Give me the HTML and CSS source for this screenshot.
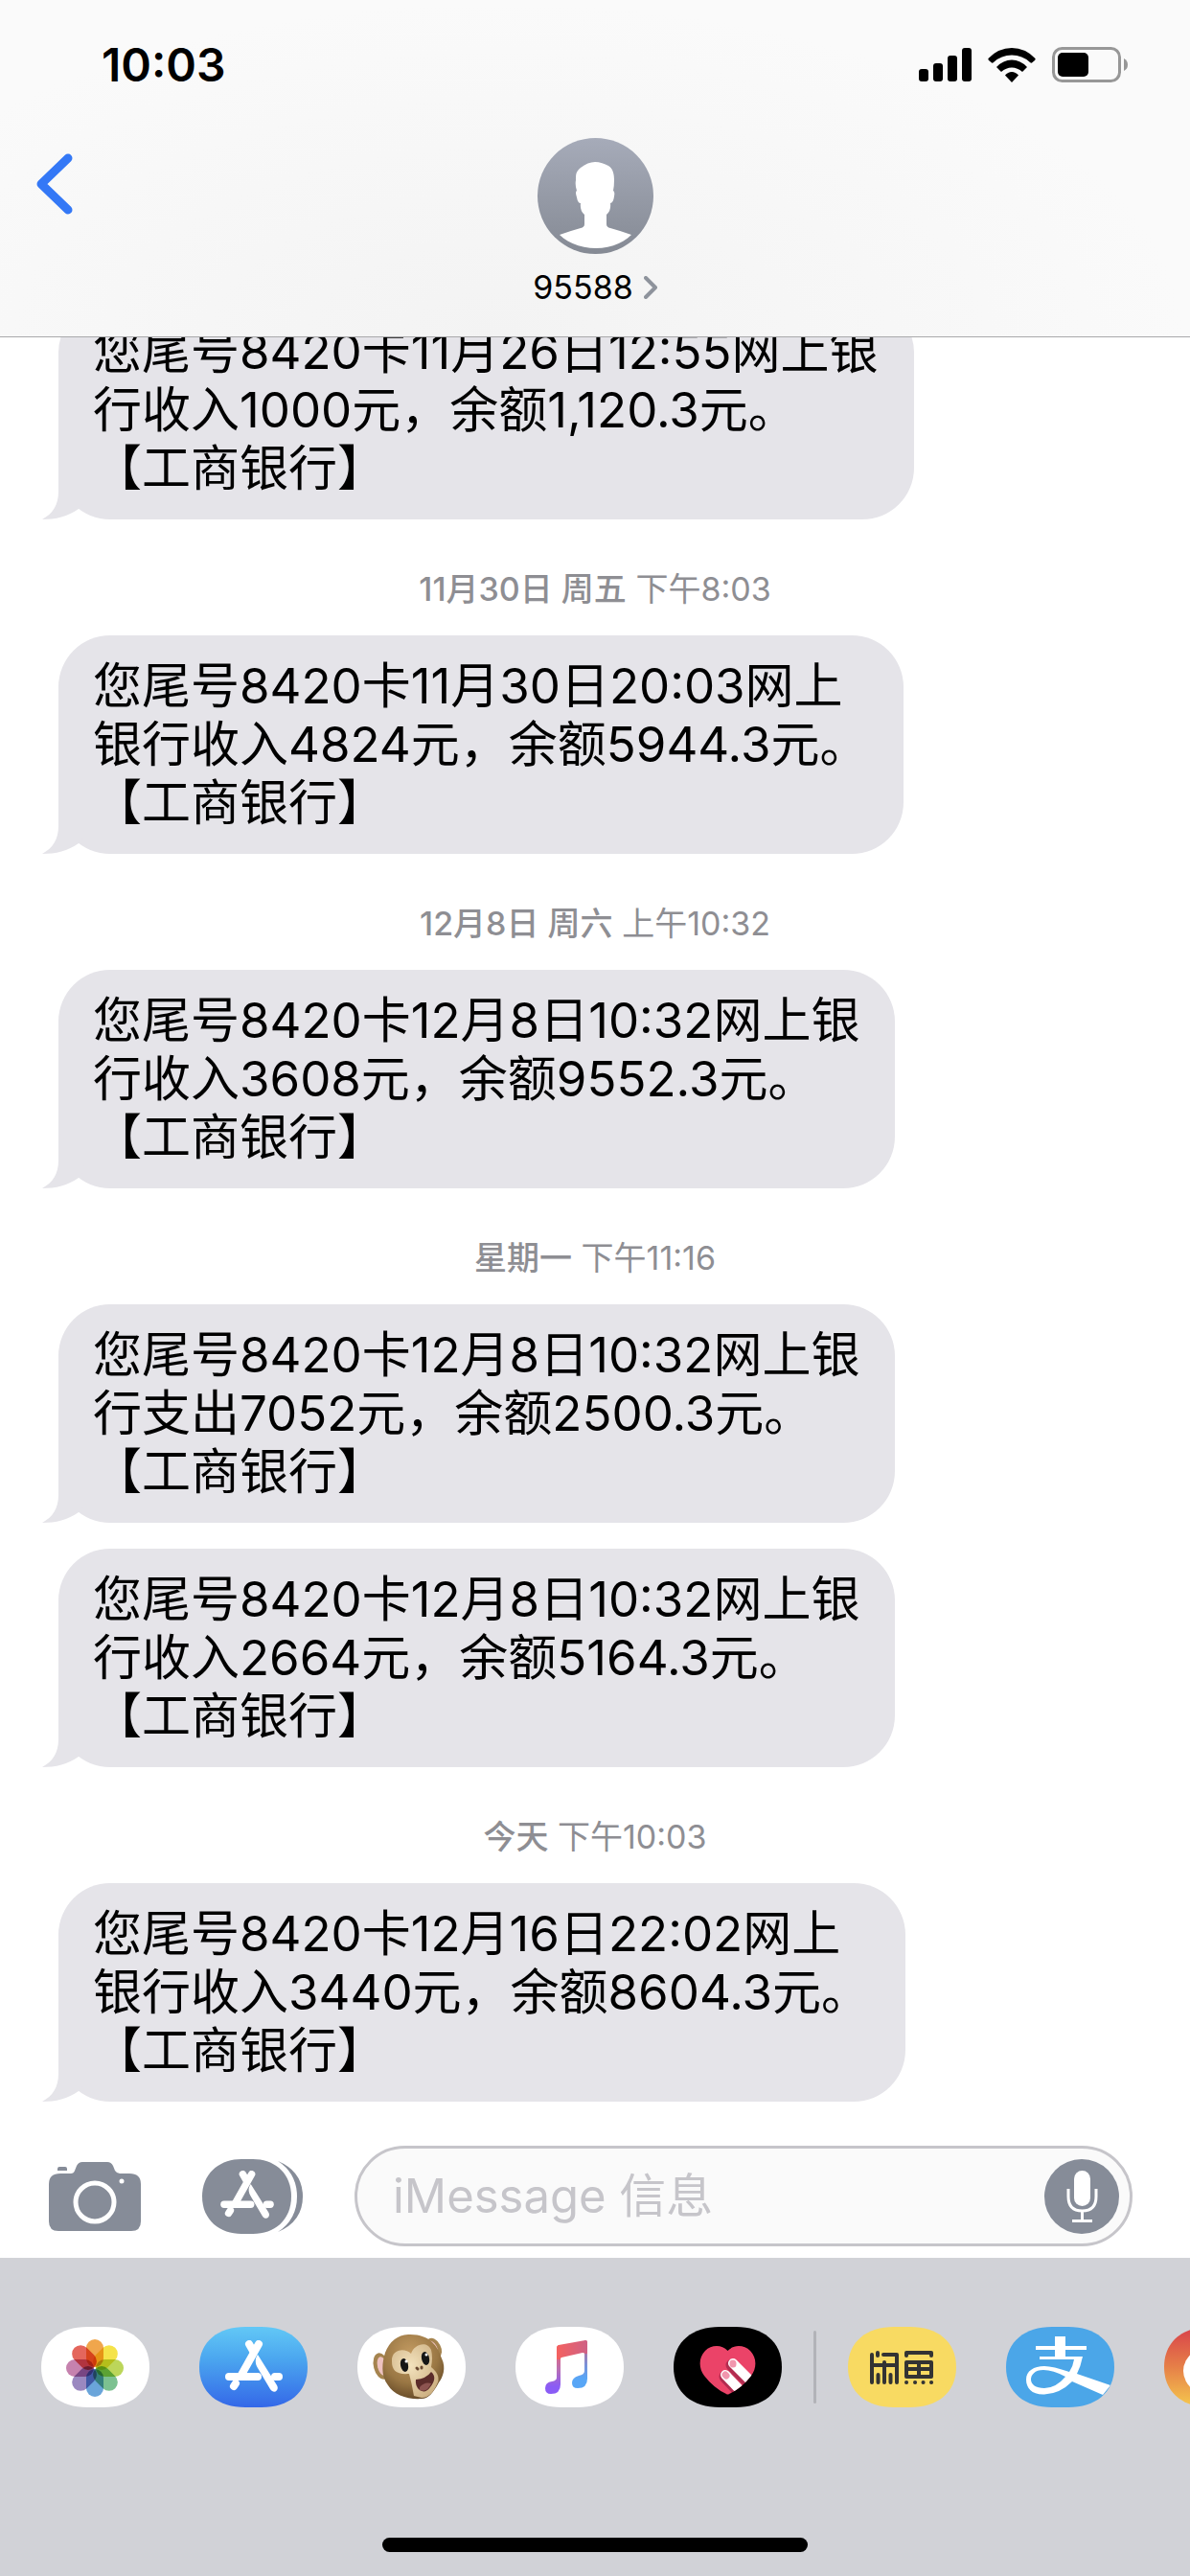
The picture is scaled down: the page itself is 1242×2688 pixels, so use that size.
FILE: index.html
```html
<!DOCTYPE html>
<html lang="zh-CN">

<head>
  <meta charset="UTF-8">
  <meta name="viewport" content="width=device-width, initial-scale=1.0">
  <title>95588</title>
  <link rel="stylesheet" href="styles.css">
</head>

<body>
  <!-- shared shapes -->
  <svg class="defs" aria-hidden="true">
    <defs>
      <symbol id="tail" viewBox="0 0 46 60">
        <path d="M17 0V31C17 45 11 54 0 60C14 60 27 57 38 49L46 40Z" />
      </symbol>
      <symbol id="appstore" viewBox="0 0 60 54">
        <g fill="none" stroke="currentColor" stroke-width="8" stroke-linecap="round">
          <path d="M4 38H34" />
          <path d="M25 4L29 11" />
          <path d="M35 4L17 36" />
          <path d="M52 38H56" />
          <path d="M9 48L11 45" />
        </g>
        <path d="M34 15C31 19 31 24 34 29L47 51C51 57 57 52 54 47Z" fill="currentColor" />
      </symbol>
      <clipPath id="pill">
        <path d="M0 42C0 15 20 0 48 0H65C93 0 113 15 113 42S93 84 65 84H48C20 84 0 69 0 42Z" />
      </clipPath>
    </defs>
  </svg>

  <header class="header">
    <div class="status">
      <span class="time">10:03</span>
      <div class="status-icons">
        <svg width="55" height="36" viewBox="0 0 55 36">
          <rect x="0" y="22" width="10" height="13" rx="3" />
          <rect x="15" y="16" width="10" height="19" rx="3" />
          <rect x="30" y="8" width="10" height="27" rx="3" />
          <rect x="45" y="0" width="10" height="35" rx="3" />
        </svg>
        <svg width="50" height="36" viewBox="0 0 50 36">
          <path d="M0.500 11Q11 0 25 0T49.500 11Q50 12 49 13L46 15.500Q45 16 44 15Q36 7.500 25 7.500T6 15Q5 16 4 15.500L1 13Q0 12 0.500 11Z" />
          <path d="M9 20Q16 12.500 25 12.500T41 20L36 25Q31 20.500 25 20.500T14 25Z" />
          <path d="M18 28.500Q21 25 25 25T32 28.500L25 36Z" />
        </svg>
        <svg width="80" height="38" viewBox="0 0 80 38">
          <rect x="1.500" y="1.500" width="69" height="34" rx="9" fill="none" stroke="#979797" stroke-width="3" />
          <rect x="6" y="6" width="32" height="25" rx="5" />
          <path d="M75 12Q79 14 79 18.500T75 25Z" fill="#979797" />
        </svg>
      </div>
    </div>
    <div class="navbar">
      <button class="back" aria-label="返回">
        <svg width="38" height="64" viewBox="0 0 38 64">
          <path d="M33 5L5 32L33 59" fill="none" stroke="#3478f6" stroke-width="9" stroke-linecap="round" stroke-linejoin="round" />
        </svg>
      </button>
      <a class="contact" href="#contact">
        <svg width="121" height="121" viewBox="0 0 121 121">
          <defs>
            <linearGradient id="avatar-bg" x1="0" y1="0" x2="0" y2="1">
              <stop offset="0" stop-color="#a6abb9" />
              <stop offset="1" stop-color="#858a94" />
            </linearGradient>
          </defs>
          <circle cx="60.500" cy="60.500" r="60.500" fill="url(#avatar-bg)" />
          <path fill="#fff" d="M60 25C65 25 70 27 74 29C79 32 80 38 80 44Q80 50 79 55Q81 56 80 61Q79 68 76 68Q77 76 72 80V90Q72 93 76 94Q87 97 98 101C89 110 75 115 61 115S32 110 23 101Q34 97 45 94Q49 93 49 90V80Q44 76 45 68Q42 68 41 62Q39 56 41 55Q39 49 40 44C40 38 40 35 45 31C50 27 55 25 60 25Z" />
        </svg>
        <span class="contact-name">95588
          <svg width="14" height="24" viewBox="0 0 14 24">
            <path d="M2 2L12 12L2 22" fill="none" stroke="#8e939c" stroke-width="4" stroke-linecap="round" stroke-linejoin="round" />
          </svg>
        </span>
      </a>
    </div>
  </header>

  <main class="messages">
    <p class="bubble">您尾号8420卡11月26日12:55网上银<br>行收入1000元，余额1,120.3元。<br>【工商银行】<svg class="tail"><use href="#tail" /></svg></p>
    <div class="date"><b>11月30日 周五</b> 下午8:03</div>
    <p class="bubble">您尾号8420卡11月30日20:03网上<br>银行收入4824元，余额5944.3元。<br>【工商银行】<svg class="tail"><use href="#tail" /></svg></p>
    <div class="date"><b>12月8日 周六</b> 上午10:32</div>
    <p class="bubble">您尾号8420卡12月8日10:32网上银<br>行收入3608元，余额9552.3元。<br>【工商银行】<svg class="tail"><use href="#tail" /></svg></p>
    <div class="date"><b>星期一</b> 下午11:16</div>
    <p class="bubble">您尾号8420卡12月8日10:32网上银<br>行支出7052元，余额2500.3元。<br>【工商银行】<svg class="tail"><use href="#tail" /></svg></p>
    <p class="bubble next">您尾号8420卡12月8日10:32网上银<br>行收入2664元，余额5164.3元。<br>【工商银行】<svg class="tail"><use href="#tail" /></svg></p>
    <div class="date"><b>今天</b> 下午10:03</div>
    <p class="bubble">您尾号8420卡12月16日22:02网上<br>银行收入3440元，余额8604.3元。<br>【工商银行】<svg class="tail"><use href="#tail" /></svg></p>
  </main>

  <form class="compose">
    <button type="button" class="icon-btn" aria-label="相机">
      <svg width="96" height="72" viewBox="0 0 96 72">
        <path fill="#868c98" d="M9 9V7Q9 5 11 5H17Q19 5 19 7V9ZM12 12H23Q26 12 27 9L29 4Q31 0 35 0H61Q65 0 67 4L69 9Q71 12 74 12H84Q96 12 96 23V62Q96 72 86 72H10Q0 72 0 62V23Q0 12 12 12Z" />
        <circle cx="48" cy="42" r="20" fill="none" stroke="#fff" stroke-width="5" />
        <circle cx="76" cy="20" r="2.500" fill="#fff" />
      </svg>
    </button>
    <button type="button" class="icon-btn" aria-label="App">
      <svg width="106" height="78" viewBox="0 0 106 78">
        <path fill="#868c98" d="M0 39C0 14 19 0 41 0H53C75 0 93 14 93 39S75 78 53 78H41C19 78 0 64 0 39Z" />
        <path fill="#868c98" d="M79 2Q105 13 105 39T79 76Q99 63 99 39T79 2Z" />
        <svg x="19" y="12" width="56" height="50" color="#fff"><use href="#appstore" /></svg>
      </svg>
    </button>
    <div class="field">
      <input class="field-input" type="text" placeholder="iMessage 信息" aria-label="iMessage 信息">
      <button type="button" class="mic" aria-label="语音">
        <svg width="78" height="78" viewBox="0 0 78 78">
          <circle cx="39" cy="39" r="39" fill="#868c98" />
          <rect x="31" y="12" width="17" height="37" rx="8.500" fill="#fff" />
          <path d="M25 31V39Q25 54 39.500 54T54 39V31M39.500 54V64M29 64.500H50" fill="none" stroke="#fff" stroke-width="3" />
        </svg>
      </button>
    </div>
  </form>

  <nav class="tray">
    <div class="apps">
      <button class="app" aria-label="照片">
        <svg width="113" height="84" viewBox="0 0 113 84">
          <g clip-path="url(#pill)">
            <rect width="113" height="84" fill="#fff" />
            <g class="petals" transform="translate(56 43)">
              <rect x="-9" y="-30" width="18" height="29" rx="9" fill="#f0a64c" />
              <rect x="-9" y="-30" width="18" height="29" rx="9" fill="#f5e34a" transform="rotate(45)" />
              <rect x="-9" y="-30" width="18" height="29" rx="9" fill="#bcd65a" transform="rotate(90)" />
              <rect x="-9" y="-30" width="18" height="29" rx="9" fill="#7cc190" transform="rotate(135)" />
              <rect x="-9" y="-30" width="18" height="29" rx="9" fill="#6aa5da" transform="rotate(180)" />
              <rect x="-9" y="-30" width="18" height="29" rx="9" fill="#9a88c0" transform="rotate(225)" />
              <rect x="-9" y="-30" width="18" height="29" rx="9" fill="#c682ae" transform="rotate(270)" />
              <rect x="-9" y="-30" width="18" height="29" rx="9" fill="#e4665c" transform="rotate(315)" />
            </g>
          </g>
        </svg>
      </button>
      <button class="app" aria-label="App Store">
        <svg width="113" height="84" viewBox="0 0 113 84">
          <defs>
            <linearGradient id="store-bg" x1="0" y1="0" x2="0" y2="1">
              <stop offset="0" stop-color="#62c8f6" />
              <stop offset="0.400" stop-color="#4ba6ef" />
              <stop offset="1" stop-color="#3468e8" />
            </linearGradient>
          </defs>
          <rect width="113" height="84" fill="url(#store-bg)" clip-path="url(#pill)" />
          <svg x="27" y="14" width="60" height="54" color="#fff"><use href="#appstore" /></svg>
        </svg>
      </button>
      <button class="app" aria-label="拟我表情">
        <svg width="113" height="84" viewBox="0 0 113 84">
          <defs>
            <radialGradient id="fur" cx="0.450" cy="0.300" r="0.750">
              <stop offset="0" stop-color="#c39b62" />
              <stop offset="0.600" stop-color="#9a7744" />
              <stop offset="1" stop-color="#604524" />
            </radialGradient>
            <radialGradient id="face" cx="0.400" cy="0.400" r="0.750">
              <stop offset="0" stop-color="#f3e2bd" />
              <stop offset="1" stop-color="#c9ab7c" />
            </radialGradient>
          </defs>
          <rect width="113" height="84" fill="#fff" clip-path="url(#pill)" />
          <ellipse cx="25" cy="41" rx="8" ry="14" fill="#a5844f" transform="rotate(-14 25 41)" />
          <ellipse cx="26" cy="41" rx="5" ry="10" fill="#eec2c0" transform="rotate(-14 26 41)" />
          <ellipse cx="80" cy="22" rx="7" ry="11" fill="#a5844f" transform="rotate(-28 80 22)" />
          <ellipse cx="79" cy="22" rx="4" ry="8" fill="#eec2c0" transform="rotate(-28 79 22)" />
          <path fill="url(#fur)" d="M53 8C75 7 84 20 88 33C93 43 89 53 85 58C79 69 74 75 67 75C52 76 38 71 32 61C24 51 26 36 29 27Q36 9 53 8Z" />
          <path fill="url(#face)" d="M36 36C35 24 49 21 56 28C59 18 73 14 77 24Q79 32 77 42Q88 51 83 60Q77 74 67 74L59 72Q57 60 54 49C41 50 36 46 36 36Z" />
          <ellipse cx="49" cy="40" rx="4" ry="7" fill="#161616" transform="rotate(-12 49 40)" />
          <ellipse cx="71" cy="33" rx="4" ry="7" fill="#161616" transform="rotate(-12 71 33)" />
          <circle cx="51" cy="36" r="1.500" fill="#fff" />
          <circle cx="72" cy="29" r="1.500" fill="#fff" />
          <path d="M62 43L63 44M67 42V43" stroke="#6b4a33" stroke-width="3" stroke-linecap="round" />
          <path d="M61 55Q72 54 77 47Q84 53 76 63Q71 70 65 66Q60 62 61 55Z" fill="#5b2c2a" />
          <path d="M65 63Q70 57 77 59Q73 69 65 66Z" fill="#8c5450" />
        </svg>
      </button>
      <button class="app" aria-label="音乐">
        <svg width="113" height="84" viewBox="0 0 113 84">
          <defs>
            <linearGradient id="note-left" x1="0" y1="0" x2="0" y2="1">
              <stop offset="0" stop-color="#f4615f" />
              <stop offset="0.500" stop-color="#b96fb4" />
              <stop offset="0.850" stop-color="#8a5cf6" />
            </linearGradient>
            <linearGradient id="note-right" x1="0" y1="0" x2="0" y2="1">
              <stop offset="0" stop-color="#d9617c" />
              <stop offset="0.500" stop-color="#7c8fd6" />
              <stop offset="0.800" stop-color="#58a6f6" />
            </linearGradient>
            <linearGradient id="note-top" x1="0" y1="0" x2="1" y2="0">
              <stop offset="0" stop-color="#f4615f" />
              <stop offset="1" stop-color="#cf6185" />
            </linearGradient>
          </defs>
          <rect width="113" height="84" fill="#fff" clip-path="url(#pill)" />
          <path fill="url(#note-left)" d="M43 22Q43 20 45 19L47 32V60Q47 70 37 70Q31 70 31 64T38 57Q43 56 43 53Z" />
          <path fill="url(#note-right)" d="M72 14Q75 14 75 16V54Q75 64 65 64Q59 64 59 58.500T66 51Q72 50 72 46Z" />
          <path fill="url(#note-top)" d="M43 22Q43 20 45 19L73 14Q75 14 75 16V28H72Q72 27 70 27L48 32Q47 32 47 34H43Z" />
        </svg>
      </button>
      <button class="app" aria-label="Digital Touch">
        <svg width="113" height="84" viewBox="0 0 113 84">
          <defs>
            <clipPath id="heart">
              <path d="M56.500 25C63 18 74 19 80 25C87 32 87 43 81 51Q71 64 58 70Q56.500 71 55 70Q42 64 32 51C26 43 26 32 33 25C39 19 50 18 56.500 25Z" />
            </clipPath>
          </defs>
          <rect width="113" height="84" clip-path="url(#pill)" />
          <g clip-path="url(#heart)">
            <rect width="113" height="84" fill="#eb4368" />
            <g fill="none" stroke-linecap="round">
              <path d="M54 52L74 73M61 40L84 63" stroke="#b22c50" stroke-width="13" />
              <path d="M54 50L74 71M62 38L86 62" stroke="#fff" stroke-width="10" />
              <path d="M54 50L55 51M62 38L62 39" stroke="#f196ae" stroke-width="7" />
            </g>
          </g>
        </svg>
      </button>
      <span class="divider"></span>
      <button class="app" aria-label="闲鱼">
        <svg width="113" height="84" viewBox="0 0 113 84">
          <rect width="113" height="84" fill="#f8da62" clip-path="url(#pill)" />
          <g fill="none" stroke="#333" stroke-width="4" stroke-linecap="round" stroke-linejoin="round">
            <path d="M25 29V58M31 27V30M37 29H51V58M26 40H50M38 37V58M31.500 50V58M44.500 50V58" />
            <path d="M61 30V27H87V30M61 37H87V52H61ZM62 44H86M74 38V51" />
            <path d="M61 58H61.100M70 58H70.100M78.500 58H78.600M87 58H87.100" />
          </g>
        </svg>
      </button>
      <button class="app" aria-label="支付宝">
        <svg width="113" height="84" viewBox="0 0 113 84">
          <g clip-path="url(#pill)">
            <rect width="113" height="84" fill="#4ba6e8" />
            <path fill="#fff" d="M51 10H62V20H84V24H62V31H80Q78 41 74 49L109 61L101 71L69 57Q56 70 40 70.500C27 71 21 64 21 55C21 46 29 41 40 41Q49 41 66 47Q70 41 71 34H35V31H51V24H31V20H51ZM62 52Q49 45 39 45C30 45 26 50 26 55C26 60 31 64 40 64Q52 64 62 52Z" />
          </g>
        </svg>
      </button>
      <button class="app" aria-label="更多">
        <svg width="113" height="84" viewBox="0 0 113 84">
          <defs>
            <linearGradient id="ring-bg" x1="0" y1="0" x2="0" y2="1">
              <stop offset="0" stop-color="#d8404a" />
              <stop offset="0.500" stop-color="#e68048" />
              <stop offset="1" stop-color="#f5c94e" />
            </linearGradient>
          </defs>
          <rect width="113" height="84" fill="url(#ring-bg)" clip-path="url(#pill)" />
          <ellipse cx="56" cy="46" rx="36" ry="28" fill="#fff" />
        </svg>
      </button>
    </div>
    <div class="home"></div>
  </nav>
</body>

</html>
```
FILE: styles.css
```css
* {
  box-sizing: border-box;
}

body {
  display: flex;
  flex-direction: column;
  height: 100vh;
  margin: 0;
  font-family: Inter, "Noto Sans CJK SC", sans-serif;
  background-color: white;
  color: black;
  overflow: hidden;
}

svg {
  display: block;
}

button {
  padding: 0;
  border: none;
  background: none;
  cursor: pointer;
}

.defs {
  position: absolute;
  width: 0;
  height: 0;
}

/* header */
.header {
  flex: none;
  background: radial-gradient(ellipse at 42% 100%, #f3f3f3, #fafafa 70%);
  border-bottom: 1px solid #a9a9ab;
}

.status {
  display: flex;
  justify-content: space-between;
  align-items: center;
  height: 135px;
  padding: 0 64px 0 106px;
}

.time {
  font-size: 48px;
  font-weight: 600;
}

.status-icons {
  display: flex;
  align-items: center;
  gap: 17px;
}

.navbar {
  display: grid;
  grid-template-columns: 1fr auto 1fr;
  align-items: start;
  padding: 9px 38px 30px;
}

.back {
  justify-self: start;
  padding-top: 16px;
}

.contact {
  display: flex;
  flex-direction: column;
  align-items: center;
  gap: 14px;
  color: black;
  text-decoration: none;
}

.contact-name {
  display: flex;
  align-items: center;
  gap: 11px;
  font-size: 34px;
  line-height: 42px;
}

/* messages */
.messages {
  display: flex;
  flex: 1;
  flex-direction: column;
  justify-content: flex-end;
  align-items: flex-start;
  min-height: 0;
  padding: 0 61px;
  overflow: hidden;
}

.bubble {
  position: relative;
  flex: none;
  margin: 0;
  padding: 22px 37px 23px 36px;
  border-radius: 54px;
  background-color: #e5e4e9;
  font-size: 51px;
  line-height: 61px;
  white-space: nowrap;
}

.next {
  margin-top: 27px;
}

.tail {
  position: absolute;
  left: -17px;
  bottom: 0;
  width: 46px;
  height: 60px;
  fill: #e5e4e9;
}

.date {
  align-self: center;
  flex: none;
  padding: 53px 0 28px;
  color: #8e8e93;
  font-size: 34px;
  line-height: 40px;
}

.date b {
  font-weight: 500;
}

/* compose bar */
.compose {
  display: flex;
  flex: none;
  align-items: center;
  padding: 46px 60px 12px 51px;
}

.icon-btn {
  flex: none;
  margin-right: 64px;
}

.icon-btn + .field {
  margin-left: -11px;
}

.field {
  display: flex;
  flex: 1;
  align-items: center;
  min-width: 0;
  height: 105px;
  padding: 0 11px 0 37px;
  border: 3px solid #c6c5ca;
  border-radius: 53px;
  background-color: #fafafa;
}

.field-input {
  flex: 1;
  min-width: 0;
  padding: 0;
  border: none;
  outline: none;
  background: none;
  font-family: inherit;
  font-size: 49px;
}

.field-input::placeholder {
  color: #c6c5ca;
}

.mic {
  flex: none;
}

/* app tray */
.tray {
  flex: none;
  padding: 72px 0 25px;
  background-color: #d1d2d7;
}

.apps {
  display: flex;
  align-items: center;
  gap: 52px;
  padding-left: 43px;
  overflow: hidden;
}

.app {
  flex: none;
}

.petals rect {
  mix-blend-mode: multiply;
}

.divider {
  flex: none;
  width: 3px;
  height: 76px;
  margin: 0 -19px;
  border-radius: 2px;
  background-color: #b2b3b8;
}

.home {
  width: 444px;
  height: 15px;
  margin: 136px auto 0;
  border-radius: 8px;
  background-color: black;
}
```
